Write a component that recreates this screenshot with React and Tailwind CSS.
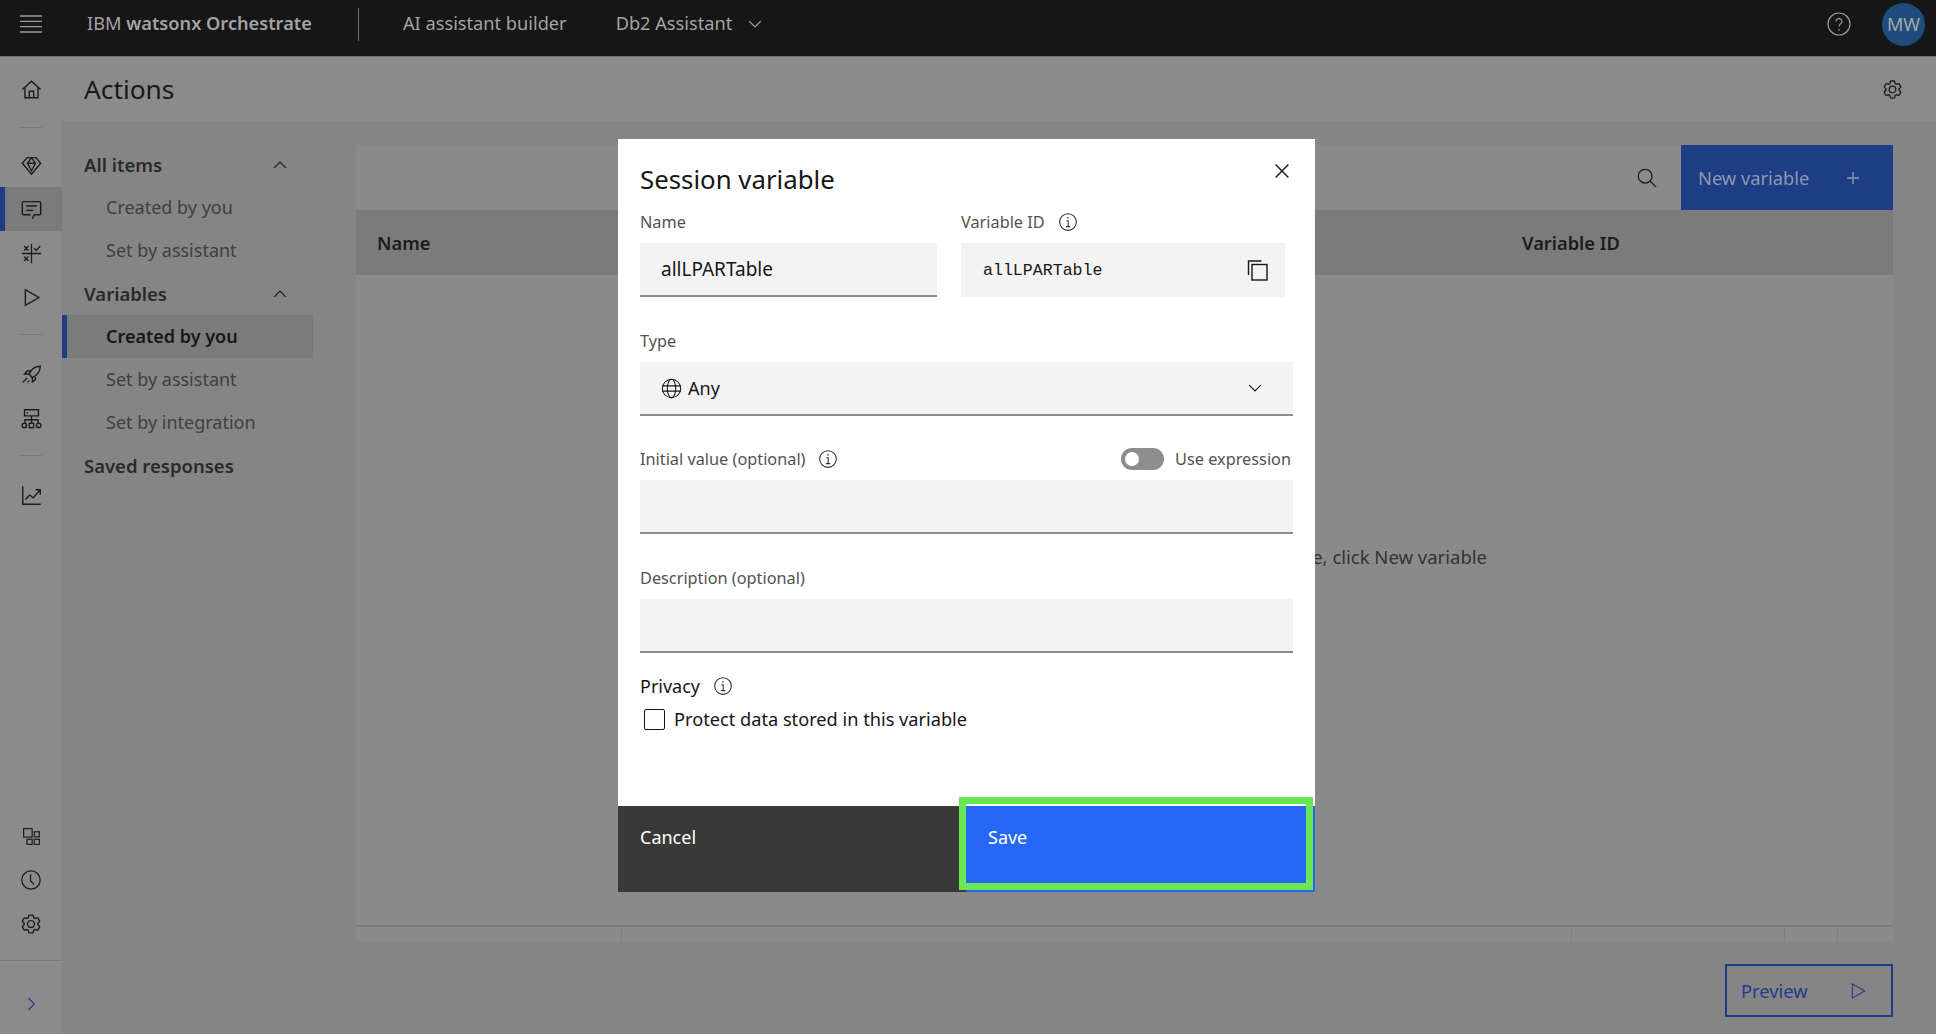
import React from "react";

function Ic({ size = 22, className = "", children, sw = 1.4, vb = "0 0 24 24" }) {
  return (
    <svg width={size} height={size} viewBox={vb} fill="none" stroke="currentColor" strokeWidth={sw} className={className}>
      {children}
    </svg>
  );
}

function Gear({ size = 22, className = "" }) {
  return (
    <svg width={size} height={size} viewBox="0 0 32 32" fill="currentColor" className={className}>
      <path d="M27,16.76c0-.25,0-.5,0-.76s0-.51,0-.77l1.92-1.68A2,2,0,0,0,29.3,11L26.94,7a2,2,0,0,0-1.73-1,2,2,0,0,0-.64.1l-2.43.82a11.35,11.35,0,0,0-1.31-.75l-.51-2.52a2,2,0,0,0-2-1.61H13.64a2,2,0,0,0-2,1.61l-.51,2.52a11.48,11.48,0,0,0-1.32.75L7.43,6.06A2,2,0,0,0,6.79,6,2,2,0,0,0,5.06,7L2.7,11a2,2,0,0,0,.41,2.51L5,15.24c0,.25,0,.5,0,.76s0,.51,0,.77L3.11,18.45A2,2,0,0,0,2.7,21L5.06,25a2,2,0,0,0,1.73,1,2,2,0,0,0,.64-.1l2.43-.82a11.35,11.35,0,0,0,1.31.75l.51,2.52a2,2,0,0,0,2,1.61h4.72a2,2,0,0,0,2-1.61l.51-2.52a11.48,11.48,0,0,0,1.32-.75l2.42.82a2,2,0,0,0,.64.1,2,2,0,0,0,1.73-1L29.3,21a2,2,0,0,0-.41-2.51ZM25.21,24l-3.43-1.16a8.86,8.86,0,0,1-2.71,1.57L18.36,28H13.64l-.71-3.55a9.36,9.36,0,0,1-2.7-1.57L6.79,24,4.43,20l2.72-2.4a8.9,8.9,0,0,1,0-3.13L4.43,12,6.79,8l3.43,1.16a8.86,8.86,0,0,1,2.71-1.57L13.64,4h4.72l.71,3.55a9.36,9.36,0,0,1,2.7,1.57L25.21,8,27.57,12l-2.72,2.4a8.9,8.9,0,0,1,0,3.13L27.57,20Z" />
      <path d="M16,22a6,6,0,1,1,6-6A5.94,5.94,0,0,1,16,22Zm0-10a3.91,3.91,0,0,0-4,4,3.91,3.91,0,0,0,4,4,3.91,3.91,0,0,0,4-4A3.91,3.91,0,0,0,16,12Z" />
    </svg>
  );
}

function Info({ className = "" }) {
  return (
    <Ic size={20} sw={1.3} className={className}>
      <circle cx="12" cy="12" r="10" />
      <path d="M10 10.5h2.2V17.5M9.5 17.5h5.2" />
      <circle cx="12" cy="7" r="1" fill="currentColor" stroke="none" />
    </Ic>
  );
}

function ChevUp() {
  return (
    <Ic size={20} sw={1.5}>
      <path d="M5 15.5l7-7 7 7" />
    </Ic>
  );
}

function ChevDown({ size = 20 }) {
  return (
    <Ic size={size} sw={1.5}>
      <path d="M5 8.5l7 7 7-7" />
    </Ic>
  );
}

function RailItem({ active, children }) {
  return (
    <div className={`h-11 w-full flex items-center justify-center text-[#1c1c1c] ${active ? "bg-[#7b7b7b] border-l-[5px] border-[#1d3d85] pr-[5px]" : ""}`}>
      {children}
    </div>
  );
}

function RailSep({ className = "" }) {
  return <div className={`h-px w-[22px] bg-[#7a7a7a] mx-auto ${className}`} />;
}

function Rail() {
  return (
    <div className="w-[62px] shrink-0 bg-[#8b8b8b] flex flex-col pt-[10px]">
      <RailItem>
        <Ic size={21} sw={1.6}>
          <path d="M1.5 12L12 2.5 22.5 12M4.5 9.5V21.5h15V9.5M9.5 21.5V14h5v7.5" />
        </Ic>
      </RailItem>
      <RailSep className="mt-[16px] mb-[15px]" />
      <RailItem>
        <Ic size={21} sw={1.6}>
          <path d="M7 3h10l5.5 6.5L12 22 1.5 9.5 7 3zM7.5 9.5h9L12 18 7.5 9.5zM12 3L7.5 9.5M12 3l4.5 6.5" />
        </Ic>
      </RailItem>
      <RailItem active>
        <Ic size={21} sw={1.6}>
          <path d="M13 22.5l2-4.5h6a1.5 1.5 0 0 0 1.5-1.5v-12A1.5 1.5 0 0 0 21 3H3a1.5 1.5 0 0 0-1.5 1.5v12A1.5 1.5 0 0 0 3 18h8" />
          <path d="M6 8h12M6 13h8" />
        </Ic>
      </RailItem>
      <RailItem>
        <Ic size={21} sw={1.5}>
          <path d="M1 12h22M12 1v22M3.5 3.5l5 5M8.5 3.5l-5 5M3.5 15.5l5 5M8.5 15.5l-5 5M15 6l2.5 2.5L22 3.5" />
        </Ic>
      </RailItem>
      <RailItem>
        <Ic size={21} sw={1.6}>
          <path d="M5 3v18L20.5 12 5 3z" />
        </Ic>
      </RailItem>
      <RailSep className="mt-[15px] mb-[17px]" />
      <RailItem>
        <Ic size={21} sw={1.6}>
          <path d="M22 2.5c-6 0-10 3-13 9l4 4c6-3 9-7 9-13zM9 11.5H4l3-3.5h4.5M13 15.5v5l3.5-3V13M7 16l-5 5M9.5 19l-2 2" />
        </Ic>
      </RailItem>
      <RailItem>
        <Ic size={21} sw={1.6}>
          <path d="M4 2h16v7H4zM12 9v8.5M4.5 17.5V13.5h15v4" />
          <path d="M6.5 5.5h1.5" />
          <circle cx="3.8" cy="20" r="2.5" />
          <rect x="9.5" y="17.5" width="5" height="5" />
          <circle cx="20.2" cy="20" r="2.5" />
        </Ic>
      </RailItem>
      <RailSep className="mt-[15px] mb-[17px]" />
      <RailItem>
        <Ic size={21} sw={1.6}>
          <path d="M2 1.5V22h20.5M5 16.5l5-5 4 3 7.5-8.5M16.5 5.5h5.5V11" />
        </Ic>
      </RailItem>
      <div className="mt-auto">
        <RailItem>
          <svg width="17" height="17" viewBox="0 0 16 16" fill="none" stroke="currentColor" strokeWidth="1.1">
            <rect x="0.6" y="0.6" width="8" height="8" />
            <rect x="10.6" y="3.5" width="4.8" height="4.8" />
            <rect x="3.8" y="10.6" width="4.8" height="4.8" />
            <rect x="10.6" y="10.6" width="4.8" height="4.8" />
          </svg>
        </RailItem>
        <RailItem>
          <Ic>
            <circle cx="12" cy="12" r="10" />
            <path d="M11.5 5.5V13l4 4" />
          </Ic>
        </RailItem>
        <RailItem>
          <Gear />
        </RailItem>
        <div className="h-px w-full bg-[#7a7a7a] mt-[14px]" />
        <div className="h-[73px] flex items-center justify-center text-[#1d3d85] pt-[13px]">
          <Ic size={18} sw={1.5}>
            <path d="M8.5 4l8 8-8 8" />
          </Ic>
        </div>
      </div>
    </div>
  );
}

function NavRow({ children, head, active, chevron }) {
  return (
    <div
      className={`h-[43px] flex items-center ${head ? "text-[18.5px] pl-[22px] font-semibold text-[#2a2a2a] w-[250px] justify-between pr-[22px]" : "text-[18px] pl-[44px] text-[#3f3f3f]"} ${active ? "bg-[#7b7b7b] border-l-[5px] border-[#1d3d85] !pl-[39px] w-[251px] font-semibold !text-[#181818]" : ""}`}
    >
      <span>{children}</span>
      {chevron && <span className="text-[#1c1c1c]"><ChevUp /></span>}
    </div>
  );
}

function Nav() {
  return (
    <div className="w-[294px] shrink-0 pt-[22px]">
      <NavRow head chevron>All items</NavRow>
      <NavRow>Created by you</NavRow>
      <NavRow>Set by assistant</NavRow>
      <NavRow head chevron>Variables</NavRow>
      <NavRow active>Created by you</NavRow>
      <NavRow>Set by assistant</NavRow>
      <NavRow>Set by integration</NavRow>
      <NavRow head>Saved responses</NavRow>
    </div>
  );
}

function TablePanel() {
  return (
    <div className="flex-1 flex flex-col">
      <div className="mt-6 h-[797px] bg-[#8a8a8a] flex flex-col">
        <div className="h-[65px] flex justify-end items-stretch shrink-0">
          <div className="flex items-center pr-[23px] text-[#1c1c1c]">
            <Ic size={22} sw={1.4}>
              <circle cx="10" cy="10" r="7.5" />
              <path d="M15.5 15.5L22 22" />
            </Ic>
          </div>
          <div className="w-[212px] bg-[#1d3d85] flex items-center justify-between pl-[17px] pr-[33px] text-[18.3px] text-[#8f98b0]">
            <span>New variable</span>
            <svg width="14" height="14" viewBox="0 0 14 14" stroke="currentColor" strokeWidth="1.3"><path d="M7 1v12M1 7h12" /></svg>
          </div>
        </div>
        <div className="h-[65px] shrink-0 bg-[#7b7b7b] text-[18.3px] font-semibold text-[#1c1c1c] flex items-center">
          <span className="w-[1166px] pl-[21px]">Name</span>
          <span>Variable ID</span>
        </div>
        <div className="flex-1 flex items-center justify-end pr-[406px] pb-[86px] text-[18.5px] text-[#333333]">
          To add a variable, click New variable
        </div>
        <div className="h-[17px] shrink-0 border-t-2 border-[#7d7d7d] flex">
          <div className="w-[266px] border-r border-[#7d7d7d]" />
          <div className="w-[950px] border-r border-[#7d7d7d]" />
          <div className="w-[213px] border-r border-[#7d7d7d]" />
          <div className="w-[53px] border-r border-[#7d7d7d]" />
          <div className="flex-1 bg-[#8a8a8a]" />
        </div>
      </div>
      <div className="flex justify-end mt-[22px]">
        <div className="w-[168px] h-[53px] border-2 border-[#1d3d85] flex items-center justify-between pl-[14px] pr-[24px] text-[18.3px] text-[#1d3d85]">
          <span>Preview</span>
          <Ic size={18} sw={1.4}>
            <path d="M4.5 2.5v19L21 12 4.5 2.5z" />
          </Ic>
        </div>
      </div>
    </div>
  );
}

function Label({ children, info, className = "" }) {
  return (
    <div className={`h-5 flex items-center text-[16.3px] text-[#525252] mb-[11px] ${className}`}>
      <span>{children}</span>
      {info && <span className="ml-[13px] flex text-[#303030]"><Info /></span>}
    </div>
  );
}

function Field({ children, className = "" }) {
  return <div className={`h-[54px] bg-[#f3f3f3] border-b-2 border-[#8d8d8d] flex items-center text-[#161616] ${className}`}>{children}</div>;
}

function Modal() {
  return (
    <div className="absolute left-[618px] top-[139px] w-[697px] h-[753px] bg-white flex flex-col">
      <div className="h-[73px] pl-[22px] pr-[22px] pt-[20px] flex justify-between items-start shrink-0">
        <span className="text-[25.8px] leading-[40px] text-[#161616]">Session variable</span>
        <span className="text-[#161616] mt-[1px]">
          <Ic size={22} sw={1.5}>
            <path d="M5 5l14 14M19 5L5 19" />
          </Ic>
        </span>
      </div>
      <div className="pl-[22px] pr-[22px] flex-1 flex flex-col">
        <div className="flex gap-[24px]">
          <div className="w-[297px]">
            <Label>Name</Label>
            <Field className="pl-[21px] text-[19px]">allLPARTable</Field>
          </div>
          <div className="w-[324px]">
            <Label info>Variable ID</Label>
            <div className="h-[54px] bg-[#f3f3f3] flex items-center justify-between pl-[22px] pr-[16px] text-[16.6px] text-[#161616]" style={{ fontFamily: '"Liberation Mono", monospace' }}>
              <span className="pt-[3px]">allLPARTable</span>
              <svg width="22" height="22" viewBox="0 0 22 22" fill="none" stroke="#161616" strokeWidth="1.4">
                <path d="M1.5 16V2h13" />
                <rect x="5" y="5.5" width="15" height="15.5" />
              </svg>
            </div>
          </div>
        </div>
        <Label className="mt-[34px]">Type</Label>
        <Field className="pl-[21px] pr-[28px] justify-between text-[18px]">
          <span className="flex items-center gap-[6px]">
            <Ic size={21} sw={1.2}>
              <circle cx="12" cy="12" r="10.5" />
              <ellipse cx="12" cy="12" rx="4.8" ry="10.5" />
              <path d="M1.5 9h21M1.5 15h21" />
            </Ic>
            Any
          </span>
          <ChevDown />
        </Field>
        <div className="flex justify-between items-start mt-[33px]">
          <Label info>Initial value (optional)</Label>
          <div className="flex items-center h-5 text-[16.3px] text-[#525252] pr-[2px]">
            <span className="w-[43px] h-[22px] rounded-full bg-[#8d8d8d] relative mr-[11px] block">
              <span className="absolute left-[4px] top-[4px] w-[14px] h-[14px] rounded-full bg-white" />
            </span>
            Use expression
          </div>
        </div>
        <Field />
        <Label className="mt-[34px]">Description (optional)</Label>
        <Field />
        <div className="h-5 flex items-center text-[18px] text-[#161616] mt-[23px]">
          <span>Privacy</span>
          <span className="ml-[13px] flex text-[#303030]"><Info /></span>
        </div>
        <div className="flex items-center mt-[13px] text-[18.2px] leading-[21px] text-[#161616]">
          <span className="w-[21px] h-[21px] border-[1.5px] border-[#161616] rounded-[2px] ml-[4px] mr-[9px]" />
          Protect data stored in this variable
        </div>
      </div>
      <div className="h-[86px] shrink-0 flex text-[18px] text-white">
        <div className="w-[348px] bg-[#393939] pl-[22px] pt-[18px]">Cancel</div>
        <div className="flex-1 bg-[#2767f5] pl-[22px] pt-[18px]">Save</div>
      </div>
      <div className="absolute left-[341px] top-[658px] w-[354px] h-[93px] border-[7px] border-[#6ae752]" />
    </div>
  );
}

export default function App() {
  return (
    <div className="relative w-[1936px] h-[1034px] overflow-hidden bg-[#858585] flex flex-col" style={{ fontFamily: '"Noto Sans", Roboto, sans-serif' }}>
      <header className="h-[57px] shrink-0 bg-[#161616] border-b border-[#6f6f6f] flex items-center pb-[8px] text-[#a3a3a3] text-[18.2px]">
        <div className="w-[62px] flex justify-center text-[#9a9a9a]">
          <svg width="22" height="18" viewBox="0 0 22 18" stroke="currentColor" strokeWidth="1.3"><path d="M0 1h22M0 6.3h22M0 11.6h22M0 17h22" /></svg>
        </div>
        <div className="ml-[25px] w-[271px]">
          IBM <span className="font-semibold">watsonx Orchestrate</span>
        </div>
        <div className="h-[33px] w-px bg-[#6f6f6f]" />
        <div className="ml-[44px]">AI assistant builder</div>
        <div className="ml-[49px]">Db2 Assistant</div>
        <div className="ml-[13px] flex"><ChevDown /></div>
        <div className="ml-auto flex items-center">
          <span className="mr-[31px] flex text-[#9a9a9a]">
            <Ic size={24} sw={1.2}>
              <circle cx="12" cy="12" r="11" />
              <path d="M9 9.5a3 3 0 1 1 4.5 2.6c-1 .6-1.5 1.2-1.5 2.4" />
              <circle cx="12" cy="17.8" r=".9" fill="currentColor" stroke="none" />
            </Ic>
          </span>
          <span className="w-[43px] h-[43px] mr-[11px] rounded-full bg-[#1e4d7d] flex items-center justify-center text-[#a5a5a5] text-[18px]">MW</span>
        </div>
      </header>
      <div className="flex-1 flex min-h-0">
        <Rail />
        <div className="flex-1 flex flex-col">
          <div className="h-[64px] shrink-0 bg-[#8b8b8b] flex items-center justify-between pl-[22px] pr-[33px]">
            <span className="text-[26.3px] text-[#181818] pt-[1px]">Actions</span>
            <span className="text-[#1c1c1c] flex"><Gear size={21} /></span>
          </div>
          <div className="flex-1 flex pr-[43px]">
            <Nav />
            <TablePanel />
          </div>
        </div>
      </div>
      <Modal />
    </div>
  );
}
